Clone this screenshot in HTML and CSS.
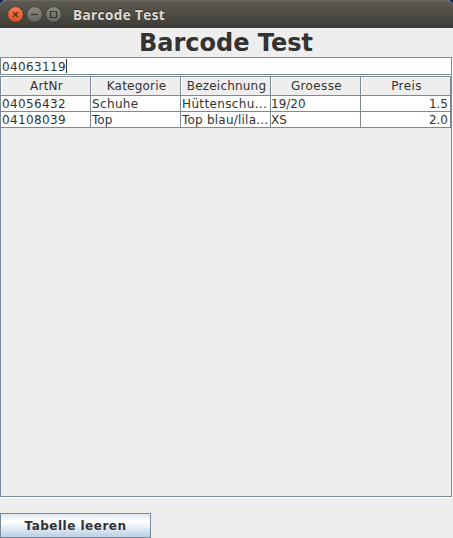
FILE: index.html
```html
<!DOCTYPE html>
<html lang="de">
<head>
<meta charset="utf-8">
<title>Barcode Test</title>
<link rel="stylesheet" href="styles.css">
</head>
<body>
<div class="window">
  <header class="titlebar">
    <svg class="controls" width="54" height="18" viewBox="0 0 54 18">
      <defs>
        <linearGradient id="close" x1="0" y1="0" x2="0" y2="1"><stop offset="0" stop-color="#f68058"/><stop offset="1" stop-color="#df4b1b"/></linearGradient>
        <linearGradient id="plain" x1="0" y1="0" x2="0" y2="1"><stop offset="0" stop-color="#8b8a83"/><stop offset="1" stop-color="#64635d"/></linearGradient>
      </defs>
      <g stroke="#35342f" stroke-width="0.8">
        <circle cx="8.5" cy="8.5" r="7.9" fill="url(#close)"/>
        <circle cx="27.5" cy="8.5" r="7.9" fill="url(#plain)"/>
        <circle cx="46.5" cy="8.5" r="7.9" fill="url(#plain)"/>
      </g>
      <g fill="none" stroke="#373630" stroke-width="1.2">
        <path d="M6 6l5 5M11 6l-5 5"/>
        <path d="M24 8.5h7"/>
        <path d="M43.5 5.5h6v6h-6z"/>
      </g>
    </svg>
    <span class="caption">Barcode Test</span>
  </header>
  <h1 class="heading">Barcode Test</h1>
  <div class="field"><span class="digits">04063119</span><i class="caret"></i></div>
  <div class="scroll">
    <div class="grid head">
      <div>ArtNr</div><div>Kategorie</div><div>Bezeichnung</div><div class="wide">Groesse</div><div class="wide">Preis</div>
    </div>
    <div class="grid row">
      <div class="digits">04056432</div><div class="digits">Schuhe</div><div class="digits">Hüttenschu...</div><div class="near">19/20</div><div class="num">1.5</div>
    </div>
    <div class="grid row">
      <div class="digits">04108039</div><div>Top</div><div class="clipped">Top blau/lila...</div><div class="near">XS</div><div class="num">2.0</div>
    </div>
  </div>
  <button class="clear">Tabelle leeren</button>
</div>
</body>
</html>
```
FILE: styles.css
```css
* { box-sizing: border-box; }
body { margin: 0; background: #eee; overflow: hidden; }
.window {
  width: 453px;
  height: 538px;
  display: flex;
  flex-direction: column;
  background: #eee;
  color: #333;
  font: 12px/15px "DejaVu Sans", sans-serif;
}
.titlebar {
  flex: none;
  height: 28px;
  display: flex;
  align-items: center;
  padding-left: 7px;
  background: linear-gradient(#5c5a52, #3d3c37);
  border-top: 1px solid #68665e;
  border-radius: 6px 6px 0 0;
  box-shadow: 0 -8px 0 6px #0b2556;
}
.controls { flex: none; margin-top: 1px; }
.caption {
  margin-left: 12px;
  color: #dfdbd2;
  font: bold 13.5px/18px "Open Sans", sans-serif;
  letter-spacing: 0.42px;
  text-shadow: 0 -1px 0 #2d2c28;
  white-space: nowrap;
}
.heading {
  flex: none;
  margin: 0;
  height: 29px;
  padding-right: 1px;
  font-size: 24px;
  line-height: 31px;
  text-align: center;
}
.field {
  flex: none;
  height: 18px;
  display: flex;
  align-items: flex-start;
  padding-left: 1px;
  line-height: 18px;
  background: #fff;
  border: 1px solid #7a8a99;
  margin-right: 1px;
  box-shadow: 1px 1px 0 #fff;
}
.digits { letter-spacing: 0.36px; }
.caret { width: 1px; height: 14px; margin-top: 1px; background: #333; }
.scroll {
  flex: none;
  height: 421px;
  margin: 1px 1px 0 0;
  border: 1px solid #7a8a99;
  box-shadow: 1px 1px 0 #fff;
}
.grid { display: grid; grid-template-columns: 90px 90px 90px 90px 90px; width: 450px; }
.grid > div {
  border-right: 1px solid #7a8a99;
  border-bottom: 1px solid #7a8a99;
  white-space: nowrap;
  overflow: hidden;
}
.head > div {
  height: 19px;
  padding-left: 2px;
  line-height: 19px;
  letter-spacing: 0.2px;
  text-align: center;
  background: #eee;
  box-shadow: inset 1px 1px 0 #fff;
}
.head > .wide { letter-spacing: 0.38px; }
.row > div { height: 16px; padding: 0 1px; line-height: 17px; background: #fff; }
.row > .clipped { letter-spacing: 0.22px; }
.row > .near { padding-left: 0; }
.row > .num { padding-right: 2px; text-align: right; }
.clear {
  flex: none;
  width: 151px;
  height: 25px;
  margin: 16px 0 0;
  padding: 1px 0 0;
  border: 1px solid #7a8a99;
  color: #333;
  font: bold 12px/15px "DejaVu Sans", sans-serif;
  letter-spacing: 0.5px;
  background: linear-gradient(#dde8f3 0%, #fff 30%, #fff 35%, #b8cfe5 100%);
}
```
